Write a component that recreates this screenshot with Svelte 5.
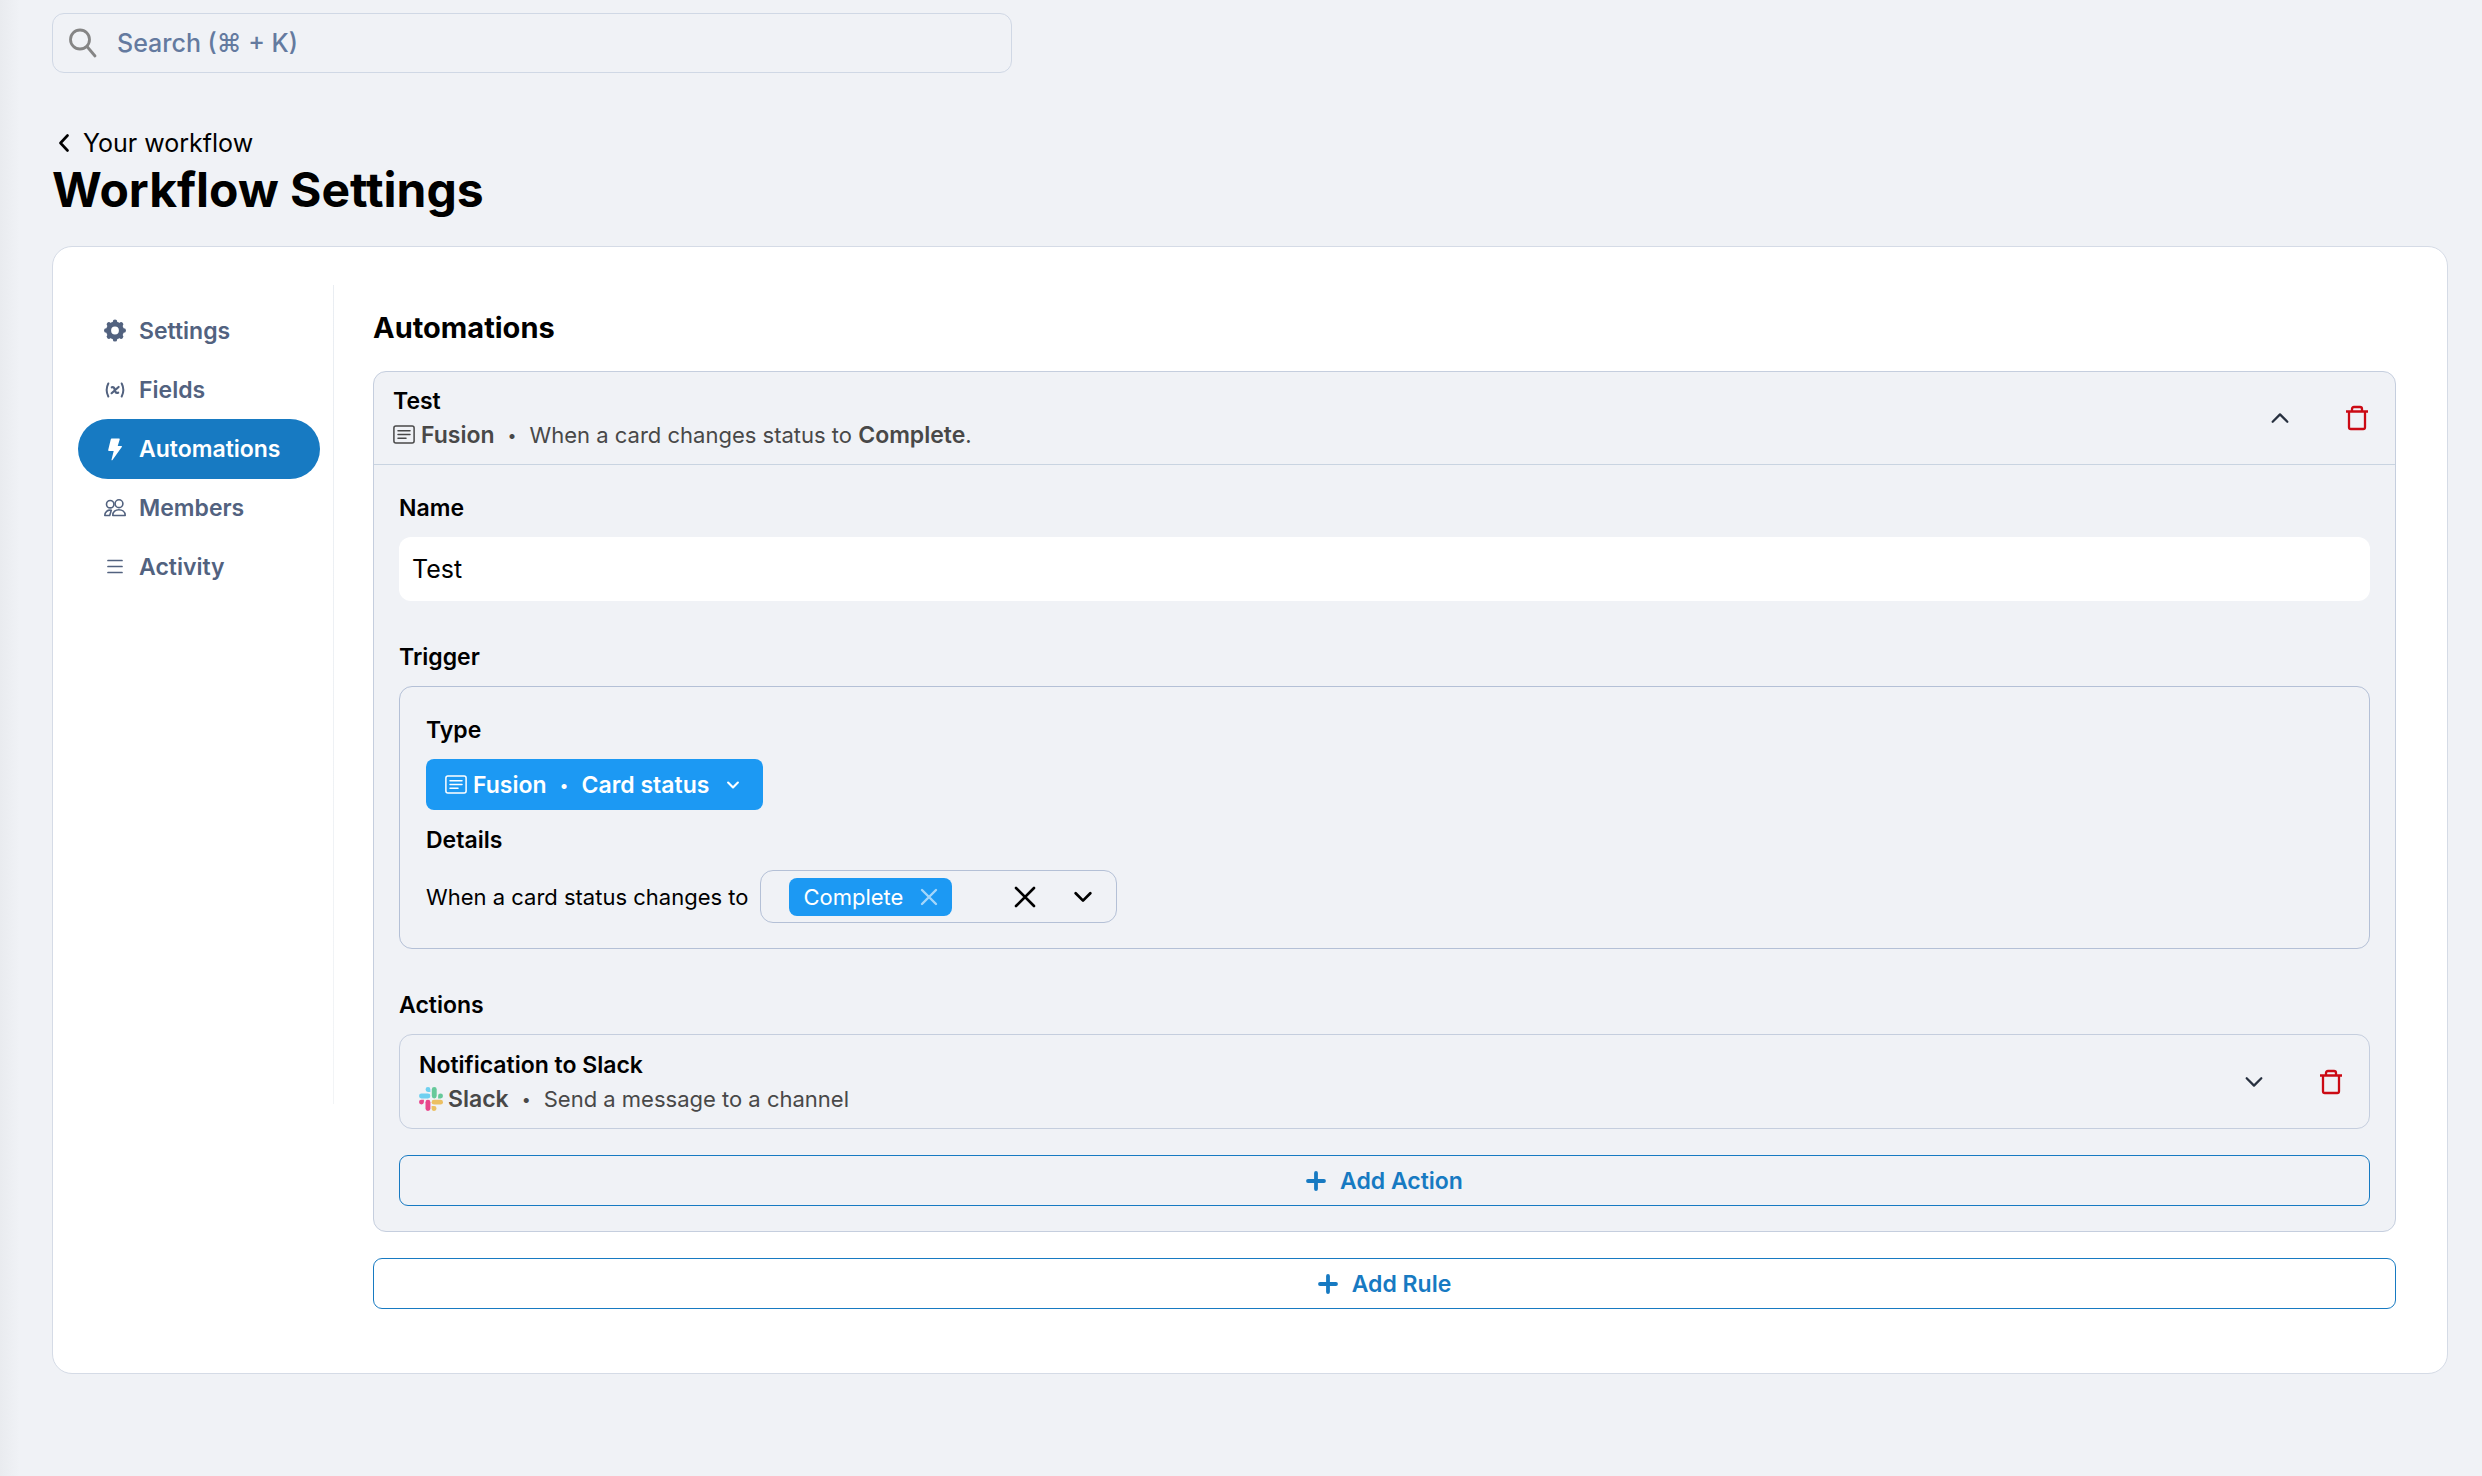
<script lang="ts">
  let query = $state('');
  let ruleName = $state('Test');

  const navItems = [
    { id: 'settings',    label: 'Settings' },
    { id: 'fields',      label: 'Fields' },
    { id: 'automations', label: 'Automations' },
    { id: 'members',     label: 'Members' },
    { id: 'activity',    label: 'Activity' },
  ];

  const active = 'automations';
</script>

{#snippet fusionIcon()}
  <svg class="card-icon" viewBox="0 0 22 22" fill="none" stroke="currentColor" stroke-width="1.5" stroke-linecap="round" aria-hidden="true">
    <rect x="0.9" y="2" width="20.2" height="17" rx="2" />
    <path d="M5 6.800h12M5 10.500h12M5 14.200h8" />
  </svg>
{/snippet}

{#snippet chevron(size: number, stroke: number)}
  <svg width={size} height={size} viewBox="0 0 16 16" fill="none" stroke="currentColor" stroke-width={stroke} stroke-linecap="round" stroke-linejoin="round" aria-hidden="true">
    <path d="M1.500 4.700 8 11.200l6.500-6.500" />
  </svg>
{/snippet}

{#snippet trash()}
  <svg width="24" height="26" viewBox="0 0 24 26" fill="none" stroke="currentColor" stroke-width="2.300" stroke-linejoin="round" aria-hidden="true">
    <path d="M1 6.500h22M7 6.500V4q0-2 2-2h6q2 0 2 2v2.500M4 6.500v15.700q0 1.800 1.800 1.800h12.400q1.800 0 1.800-1.800V6.500" />
  </svg>
{/snippet}

{#snippet plus()}
  <svg width="20" height="20" viewBox="0 0 20 20" fill="none" stroke="currentColor" stroke-width="3.800" stroke-linecap="round" aria-hidden="true">
    <path d="M10 2v16M2 10h16" />
  </svg>
{/snippet}

<div class="page">
  <label class="search">
    <svg width="28" height="30" viewBox="0 0 28 30" fill="none" stroke="#858585" stroke-width="2.800" stroke-linecap="round" aria-hidden="true">
      <circle cx="11" cy="11.500" r="9.500" />
      <path d="M18 18.500 26 28" />
    </svg>
    <input type="search" bind:value={query} placeholder="Search (⌘ + K)" aria-label="Search" />
  </label>

  <header>
    <a class="back" href="#workflow">
      <svg width="10" height="18" viewBox="0 0 10 18" fill="none" stroke="currentColor" stroke-width="2.600" stroke-linecap="round" stroke-linejoin="round" aria-hidden="true">
        <path d="M8.500 1.500 1.500 9l7 7.500" />
      </svg>
      Your workflow
    </a>
    <h1>Workflow Settings</h1>
  </header>

  <div class="card">
    <nav aria-label="Workflow settings">
      {#each navItems as { id, label }}
        <a href="#{id}" class="nav-link" class:active={id === active}>
          <svg width="22" height="24" viewBox="0 0 22 24" fill="none" stroke="currentColor" stroke-linecap="round" stroke-linejoin="round" aria-hidden="true">
            {#if id === 'settings'}
              <circle cx="11" cy="11.500" r="6.400" stroke-width="5" />
              <path stroke-width="4.400" d="M11 2.600v1M11 19.400v1M2.200 11.500h1M18.800 11.500h1M4.900 5.400l.6.600M16.500 17l.6.600M4.900 17.600l.6-.6M16.500 6l.6-.6" />
            {:else if id === 'fields'}
              <path stroke-width="2" d="M4.300 5.500Q1 12 4.300 18.500M17.700 5.500Q21 12 17.700 18.500" />
              <path stroke-width="2.200" d="M7.800 9.300q1.800-.6 2.500 1l1.200 3.400q.7 1.600 2.700 1M14.600 9 7.600 15.200" />
            {:else if id === 'automations'}
              <path fill="currentColor" stroke="none" d="M7.600 1.500H15q1 0 .7 1L13.700 9h3.700q1 .2.400 1.100L8.300 23.200q-.9.500-.8-.5L9.700 14H5q-1-.1-.8-1L6.800 2.200q.2-.7.800-.7z" />
            {:else if id === 'members'}
              <g stroke-width="1.600">
                <circle cx="6.200" cy="8.200" r="3.700" />
                <circle cx="15" cy="7.700" r="3.900" />
                <path d="M8.800 19.500c-.4-7.600 12.400-7.600 12.400 0zM7.300 14.200C3.500 13.500.8 16 .8 19.500h4.900l1.600-5.300" />
              </g>
            {:else}
              <path stroke-width="1.700" d="M4 5.500h14M4 11.500h14M4 17.500h14" />
            {/if}
          </svg>
          {label}
        </a>
      {/each}
    </nav>

    <main>
      <h2>Automations</h2>

      <section class="rule">
        <div class="summary rule-head">
          <div class="summary-text">
            <h3>Test</h3>
            <p>{@render fusionIcon()}<b>Fusion</b><span class="dot">•</span><span>When a card changes status to <b>Complete</b>.</span></p>
          </div>
          <button class="icon-btn flip" aria-label="Collapse rule">{@render chevron(18, 2)}</button>
          <button class="icon-btn danger" aria-label="Delete rule">{@render trash()}</button>
        </div>

        <div class="rule-body">
          <div class="field">
            <label for="rule-name">Name</label>
            <input id="rule-name" type="text" bind:value={ruleName} />
          </div>

          <div class="field">
            <h3>Trigger</h3>
            <div class="trigger">
              <h3>Type</h3>
              <button class="type-btn">
                {@render fusionIcon()}<span>Fusion</span><span class="dot">•</span><span>Card status</span>
                <span class="type-caret">{@render chevron(12, 2.8)}</span>
              </button>
              <h3 class="details-title">Details</h3>
              <div class="details">
                <span>When a card status changes to</span>
                <div class="multi-select">
                  <span class="chip">
                    Complete
                    <button aria-label="Remove Complete">
                      <svg width="18" height="18" viewBox="0 0 18 18" stroke="currentColor" stroke-width="2.400" stroke-linecap="round" aria-hidden="true"><path d="M2 2l14 14M16 2 2 16" /></svg>
                    </button>
                  </span>
                  <button class="clear" aria-label="Clear all">
                    <svg width="22" height="22" viewBox="0 0 22 22" stroke="currentColor" stroke-width="2.600" stroke-linecap="round" aria-hidden="true"><path d="M2 2l18 18M20 2 2 20" /></svg>
                  </button>
                  <button class="open" aria-label="Show options">{@render chevron(18, 2.4)}</button>
                </div>
              </div>
            </div>
          </div>

          <div class="field">
            <h3>Actions</h3>
            <div class="summary action">
              <div class="summary-text">
                <h3>Notification to Slack</h3>
                <p>
                  <svg class="slack" viewBox="0 0 24 24" aria-hidden="true">
                    <g fill="#6fd0f0"><path d="M9 0a2.400 2.400 0 1 0 0 4.900h2.400V2.400A2.400 2.400 0 0 0 9 0" /><rect y="6.500" width="11.400" height="4.900" rx="2.450" /></g>
                    <g fill="#66c99a"><rect x="12.800" width="4.900" height="11.400" rx="2.450" /><path d="M24 9a2.400 2.400 0 1 0-4.900 0v2.400h2.500A2.400 2.400 0 0 0 24 9" /></g>
                    <g fill="#ecc062"><rect x="12.600" y="12.700" width="11.400" height="4.900" rx="2.450" /><path d="M15.100 24a2.400 2.400 0 1 0 0-4.900h-2.500v2.500a2.400 2.400 0 0 0 2.500 2.400" /></g>
                    <g fill="#e8458b"><rect x="6.500" y="12.700" width="4.900" height="11.300" rx="2.450" /><path d="M0 15.100a2.400 2.400 0 1 0 4.900 0v-2.400H2.400A2.400 2.400 0 0 0 0 15.100" /></g>
                  </svg>
                  <b>Slack</b><span class="dot">•</span><span>Send a message to a channel</span>
                </p>
              </div>
              <button class="icon-btn" aria-label="Expand action">{@render chevron(18, 2)}</button>
              <button class="icon-btn danger" aria-label="Delete action">{@render trash()}</button>
            </div>
          </div>

          <button class="add-btn">{@render plus()}Add Action</button>
        </div>
      </section>

      <button class="add-btn">{@render plus()}Add Rule</button>
    </main>
  </div>
</div>

<style>
  :global(body) {
    background: #f0f2f6;
  }

  .page {
    --primary: #177ac2;
    --accent: #1c99f3;
    --border: #c5cede;
    --surface: #f0f2f6;
    box-sizing: border-box;
    min-height: 100vh;
    padding: 13px 34px 52px 52px;
    background: linear-gradient(90deg, #e9ebef, #f0f2f6 20px);
    font-family: Inter, sans-serif;
    font-size: 22px;
    line-height: 34px;
    color: #000;
  }

  h1, h2, h3, p { margin: 0; }
  h3, .field > label {
    font-size: 23px;
    font-weight: 600;
    line-height: 34px;
  }

  a {
    color: inherit;
    text-decoration: none;
  }

  button, input {
    box-sizing: border-box;
    margin: 0;
    padding: 0;
    border: none;
    background: none;
    font: inherit;
    color: inherit;
  }
  button { cursor: pointer; }
  b {
    font-size: 23px;
    font-weight: 600;
  }
  svg {
    display: block;
    flex: none;
  }

  /* Search */
  .search {
    display: flex;
    align-items: center;
    gap: 20px;
    box-sizing: border-box;
    width: 60%;
    max-width: 960px;
    height: 60px;
    padding: 0 16px;
    border: 1px solid #d0d8e5;
    border-radius: 12px;
  }
  .search input {
    flex: 1;
    font-size: 25px;
    font-weight: 500;
    outline: none;
  }
  .search input::placeholder {
    color: #647a9f;
    opacity: 1;
  }

  /* Heading */
  header {
    display: flex;
    flex-direction: column;
    align-items: flex-start;
    margin: 53px 0 26px;
  }
  .back {
    display: flex;
    align-items: center;
    gap: 14px;
    padding-left: 7px;
    font-size: 25px;
  }
  h1 {
    font-size: 48px;
    font-weight: 700;
    line-height: 60px;
  }

  .card {
    display: flex;
    align-items: flex-start;
    padding: 38px 51px 64px 25px;
    background: #fff;
    border: 1px solid #d5dbe6;
    border-radius: 20px;
  }

  /* Side nav */
  nav {
    flex: none;
    box-sizing: border-box;
    width: 256px;
    min-height: 819px;
    padding: 16px 13px 0 0;
    border-right: 1px solid;
    border-image: linear-gradient(#e9edf2, #f2f4f6) 1;
  }
  .nav-link {
    display: flex;
    align-items: center;
    gap: 13px;
    height: 60px;
    padding: 0 26px;
    border-radius: 30px;
    font-size: 23px;
    font-weight: 600;
    color: #52627f;
  }
  .nav-link + .nav-link { margin-top: -1px; }
  .nav-link.active {
    background: var(--primary);
    color: #fff;
  }

  main {
    flex: 1;
    min-width: 0;
    padding-left: 39px;
  }
  h2 {
    margin: 23px 0;
    font-size: 29px;
    font-weight: 700;
    line-height: 40px;
  }

  /* Rule */
  .rule {
    margin-bottom: 26px;
    background: var(--surface);
    border: 1px solid var(--border);
    border-radius: 13px;
  }
  .summary {
    display: flex;
    align-items: center;
    padding: 12px 19px;
  }
  .summary-text { flex: 1; }
  .summary p {
    display: flex;
    align-items: center;
    color: #484848;
  }
  .rule-head {
    border-bottom: 1px solid #c9d4e1;
  }
  .rule-body {
    padding: 26px 25px 25px;
  }
  .card-icon {
    width: 22px;
    height: 22px;
    margin-right: 6px;
  }
  .slack {
    width: 24px;
    height: 24px;
    margin-right: 5px;
  }
  .dot {
    width: 35px;
    text-align: center;
    font-size: 16px;
  }

  .icon-btn {
    display: grid;
    place-items: center;
    width: 38px;
    height: 38px;
    margin-left: 39px;
    color: #27303f;
  }
  .icon-btn.flip svg { transform: rotate(180deg); }
  .icon-btn.danger { color: #cb0a14; }

  /* Fields */
  .field {
    display: flex;
    flex-direction: column;
    gap: 12px;
  }
  .field + .field { margin-top: 39px; }
  .field > input {
    height: 64px;
    padding: 0 13px;
    background: #fff;
    border-radius: 12px;
    font-size: 25px;
  }

  .trigger {
    padding: 26px 26px 25px;
    border: 1px solid #b4c0d6;
    border-radius: 13px;
  }
  .type-btn {
    display: flex;
    align-items: center;
    height: 51px;
    margin-top: 12px;
    padding: 0 24px 0 19px;
    background: var(--accent);
    border-radius: 8px;
    font-size: 23px;
    font-weight: 600;
    color: #fff;
  }
  .type-caret { margin-left: 18px; }
  .details-title { margin: 13px 0; }

  .details {
    display: flex;
    align-items: center;
    gap: 12px;
  }
  .multi-select {
    display: flex;
    align-items: center;
    box-sizing: border-box;
    height: 53px;
    padding: 0 24px 0 28px;
    border: 1px solid #b4c0d6;
    border-radius: 13px;
  }
  .chip {
    display: flex;
    align-items: center;
    gap: 17px;
    height: 38px;
    padding: 0 14px;
    background: var(--accent);
    border-radius: 8px;
    color: #fff;
  }
  .chip button { opacity: 0.6; }
  .clear { margin-left: 62px; }
  .open { margin-left: 38px; }

  .action {
    box-sizing: border-box;
    min-height: 95px;
    border: 1px solid var(--border);
    border-radius: 13px;
  }

  .add-btn {
    display: flex;
    align-items: center;
    justify-content: center;
    gap: 14px;
    width: 100%;
    height: 51px;
    border: 1px solid var(--primary);
    border-radius: 9px;
    font-size: 23px;
    font-weight: 600;
    color: var(--primary);
  }
  .rule-body .add-btn { margin-top: 26px; }
</style>
